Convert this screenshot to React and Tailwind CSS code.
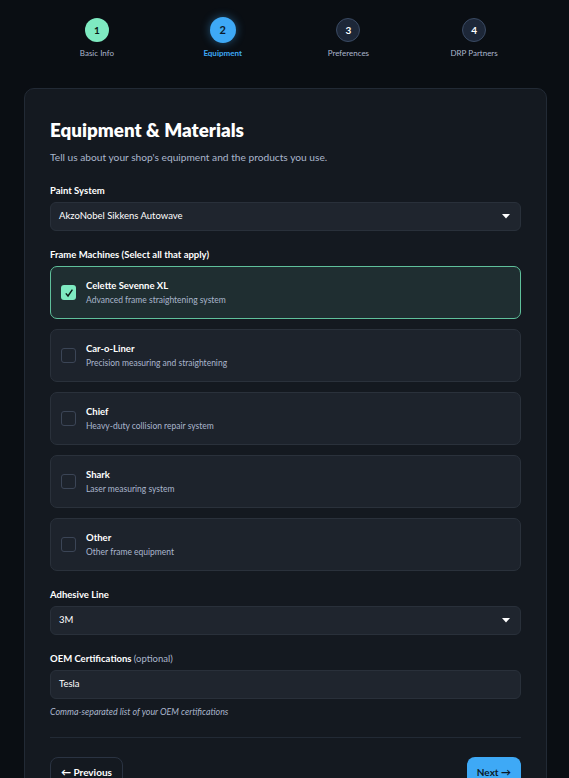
import React from "react"

const steps = [
  { n: 1, label: "Basic Info", state: "done" },
  { n: 2, label: "Equipment", state: "active" },
  { n: 3, label: "Preferences", state: "todo" },
  { n: 4, label: "DRP Partners", state: "todo" },
]

const machines = [
  { name: "Celette Sevenne XL", desc: "Advanced frame straightening system", checked: true },
  { name: "Car-o-Liner", desc: "Precision measuring and straightening" },
  { name: "Chief", desc: "Heavy-duty collision repair system" },
  { name: "Shark", desc: "Laser measuring system" },
  { name: "Other", desc: "Other frame equipment" },
]

const Stepper = () => (
  <div className="grid grid-cols-4 px-[10px] pt-[17px]">
    {steps.map((s) => (
      <div key={s.n} className="flex flex-col items-center">
        <div className="h-[26px] flex items-center justify-center">
          {s.state === "done" && (
            <div className="w-[24px] h-[24px] rounded-full bg-[#7eeac1] text-[#0b1a16] text-[10px] font-bold flex items-center justify-center">1</div>
          )}
          {s.state === "active" && (
            <div className="w-[26px] h-[26px] rounded-full bg-[#3ea9f6] text-[#0b1a2a] text-[11px] font-bold flex items-center justify-center shadow-[0_0_10px_rgba(62,169,246,0.45)]">2</div>
          )}
          {s.state === "todo" && (
            <div className="w-[24px] h-[24px] rounded-full bg-[#1d2738] border border-[#3a4a63] text-white text-[10px] font-bold flex items-center justify-center">{s.n}</div>
          )}
        </div>
        <span className={`mt-[4px] text-[8px] leading-[12px] ${s.state === "active" ? "text-[#3ea9f6] font-bold" : "text-[#aab6cc]"}`}>{s.label}</span>
      </div>
    ))}
  </div>
)

const Caret = () => (
  <svg width="8" height="5" viewBox="0 0 8 5" className="fill-white">
    <path d="M0 0h8L4 4.5z" />
  </svg>
)

const Select = ({ value }) => (
  <div className="h-[29px] rounded-[6px] bg-[#1f252e] border border-[#29303a] flex items-center justify-between pl-[8px] pr-[10px]">
    <span className="text-[9.5px] text-white">{value}</span>
    <Caret />
  </div>
)

const Label = ({ children }) => (
  <div className="text-[9.5px] font-bold text-white leading-[12px] mb-[5px]">{children}</div>
)

const Machine = ({ m }) => (
  <div className={`h-[53px] rounded-[7px] border flex items-center px-[10px] gap-[10px] ${m.checked ? "bg-[#1f2e31] border-[#5fc09b]" : "bg-[#1d232c] border-[#2a313b]"}`}>
    {m.checked ? (
      <div className="w-[15px] h-[15px] rounded-[3px] bg-[#7eeac1] flex items-center justify-center">
        <svg width="10" height="10" viewBox="0 0 10 10" fill="none" stroke="#0b1a16" strokeWidth="1.4">
          <path d="M1.8 5.4 4 8 8.4 1.6" />
        </svg>
      </div>
    ) : (
      <div className="w-[15px] h-[15px] rounded-[3px] border border-[#3b4556]"></div>
    )}
    <div className="flex flex-col gap-[3px]">
      <span className="text-[9.5px] font-bold text-white leading-[12px]">{m.name}</span>
      <span className="text-[8.5px] text-[#aab6cc] leading-[11px]">{m.desc}</span>
    </div>
  </div>
)

export default function App() {
  return (
    <div className="min-h-screen bg-[#0a0e13] pl-[24px] pr-[22px]" style={{ fontFamily: "Lato, 'Noto Sans', sans-serif" }}>
      <Stepper />
      <div className="mt-[29px] rounded-[10px] bg-[#141920] border border-[#222a35] px-[25px] pt-[29px] pb-[40px]">
        <h1 className="text-[18.8px] font-extrabold text-white leading-[24px]">Equipment &amp; Materials</h1>
        <p className="mt-[9px] text-[10.2px] text-[#aab6cc] leading-[12px]">Tell us about your shop's equipment and the products you use.</p>

        <div className="mt-[22px]">
          <Label>Paint System</Label>
          <Select value="AkzoNobel Sikkens Autowave" />
        </div>

        <div className="mt-[18px]">
          <Label>Frame Machines (Select all that apply)</Label>
          <div className="flex flex-col gap-[10px]">
            {machines.map((m) => (
              <Machine key={m.name} m={m} />
            ))}
          </div>
        </div>

        <div className="mt-[18px]">
          <Label>Adhesive Line</Label>
          <Select value="3M" />
        </div>

        <div className="mt-[18px]">
          <Label>
            OEM Certifications <span className="font-normal text-[#aab6cc]">(optional)</span>
          </Label>
          <div className="h-[29px] rounded-[6px] bg-[#1f252e] border border-[#29303a] flex items-center pl-[8px]">
            <span className="text-[9.5px] text-white">Tesla</span>
          </div>
          <p className="mt-[7px] text-[8.85px] italic text-[#aab6cc] leading-[11px]">Comma-separated list of your OEM certifications</p>
        </div>

        <div className="mt-[20px] border-t border-[#222a35]"></div>

        <div className="mt-[19px] flex items-center justify-between">
          <button className="h-[30px] px-[10px] rounded-[8px] border border-[#2a3342] text-white text-[10px] font-bold">← Previous</button>
          <button className="h-[30px] px-[10px] rounded-[8px] bg-[#3ea9f6] text-[#0b1a2a] text-[10px] font-bold">Next →</button>
        </div>
      </div>
    </div>
  )
}
